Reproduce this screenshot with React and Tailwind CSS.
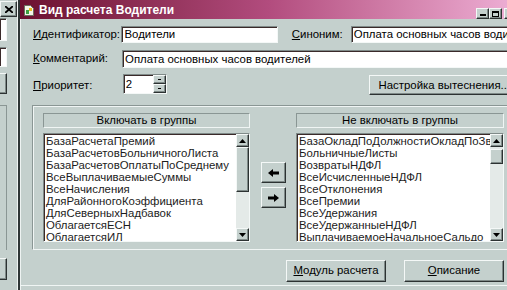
import React from 'react'

const LEFT = [
  'БазаРасчетаПремий',
  'БазаРасчетовБольничногоЛиста',
  'БазаРасчетовОплатыПоСреднему',
  'ВсеВыплачиваемыеСуммы',
  'ВсеНачисления',
  'ДляРайонногоКоэффициента',
  'ДляСеверныхНадбавок',
  'ОблагаетсяЕСН',
  'ОблагаетсяИЛ',
]

const RIGHT = [
  'БазаОкладПоДолжностиОкладПоЗвании',
  'БольничныеЛисты',
  'ВозвратыНДФЛ',
  'ВсеИсчисленныеНДФЛ',
  'ВсеОтклонения',
  'ВсеПремии',
  'ВсеУдержания',
  'ВсеУдержанныеНДФЛ',
  'ВыплачиваемоеНачальноеСальдо',
]

const raised =
  'border border-t-[#f4f8f7] border-l-[#f4f8f7] border-b-[#2c3232] border-r-[#2c3232] shadow-[inset_-1px_-1px_#7f8a88]'
const sunken =
  'border border-t-[#7f8a88] border-l-[#7f8a88] border-b-[#f4f8f7] border-r-[#f4f8f7] shadow-[inset_1px_1px_#3a2a2a]'

function Tri({ down }) {
  return (
    <svg width="7" height="4" viewBox="0 0 7 4">
      <path d={down ? 'M0 0h7L3.5 4z' : 'M3.5 0 7 4H0z'} fill="#000" />
    </svg>
  )
}

function Arrow({ right }) {
  return (
    <svg width="11" height="8" viewBox="0 0 11 8" className={right ? '' : 'rotate-180'}>
      <path d="M0 2.5h6V0l5 4-5 4V5.5H0z" fill="#000" />
    </svg>
  )
}

function ScrollBar({ thumb }) {
  return (
    <div className="w-[13px] flex flex-col">
      <div className={`h-[13px] flex items-center justify-center bg-[#c4d0cd] ${raised}`}>
        <Tri />
      </div>
      <div className="flex-1 flex flex-col bg-[#e4eae8]">
        {thumb}
      </div>
      <div className={`h-[13px] flex items-center justify-center bg-[#c4d0cd] ${raised}`}>
        <Tri down />
      </div>
    </div>
  )
}

function ListBox({ items, thumb }) {
  return (
    <div className={`h-[109px] flex bg-white ${sunken}`}>
      <div className="flex-1 min-w-0 overflow-hidden pt-[1px] pl-[2px]">
        {items.map((t) => (
          <div key={t} className="h-[12px] leading-[12px] whitespace-nowrap text-[#1c1c1c]">
            {t}
          </div>
        ))}
      </div>
      <ScrollBar thumb={thumb} />
    </div>
  )
}

function U({ children }) {
  return <span className="underline underline-offset-1">{children}</span>
}

export default function App() {
  return (
    <div className="w-[507px] h-[290px] overflow-hidden flex bg-[#c4d0cd] text-[11.4px] text-black font-['Liberation_Sans',Arial,sans-serif]">
      {/* окно позади */}
      <div className="w-[18px] shrink-0 flex flex-col border-r border-[#eef3f2]">
        <div className={`w-[17px] h-[16px] mt-px flex items-center justify-center ${raised}`}>
          <svg width="8" height="7" viewBox="0 0 8 7">
            <path d="M0 0l8 7M8 0 0 7" stroke="#000" strokeWidth="1.8" />
          </svg>
        </div>
        <div className={`w-[7px] h-[23px] mt-[1px] bg-white ${sunken} border-l-0`} />
        <div className={`w-[7px] h-[20px] mt-[6px] bg-white ${sunken} border-l-0`} />
        <div className={`w-[7px] h-[21px] mt-[6px] ${raised} border-l-0`} />
        <div className="w-[7px] h-[145px] mt-[11px] border-t border-r border-[#8a9694]" />
        <div className={`w-[7px] h-[22px] mt-[8px] ${raised} border-l-0`} />
      </div>

      {/* диалог */}
      <div className="w-[500px] shrink-0 flex flex-col overflow-hidden border-l-2 border-[#2e3636] shadow-[inset_1px_0_#eef3f2]">
        <div className="h-[19px] shrink-0 flex items-start bg-gradient-to-r from-[#6c1030] via-[#b24c7e] to-[#eeb0d6]">
          <div className="ml-[4px] mt-[5px] w-[10px] h-[11px]">
            <svg width="10" height="11" viewBox="0 0 10 11">
              <path d="M0.5 0.5h6l3 3v7h-9z" fill="#f4f4e8" stroke="#6a7060" />
              <rect x="2" y="5" width="3" height="4" fill="#3ca040" />
              <rect x="5" y="3" width="3" height="3" fill="#e8c020" />
            </svg>
          </div>
          <div className="ml-[5px] mt-[3px] text-white font-bold text-[12px] leading-[14px] whitespace-nowrap">
            Вид расчета Водители
          </div>
          <div className="ml-auto mt-[8px] flex">
            <div className={`w-[13px] h-[11px] bg-[#c4d0cd] flex items-end justify-center pb-[2px] ${raised}`}>
              <div className="w-[6px] h-[2px] bg-black" />
            </div>
            <div className={`w-[13px] h-[11px] bg-[#c4d0cd] flex items-center justify-center ${raised}`}>
              <div className="w-[7px] h-[6px] border border-t-2 border-black" />
            </div>
            <div className={`w-[14px] h-[11px] ml-[2px] bg-[#c4d0cd] ${raised}`} />
          </div>
        </div>

        <div className="flex items-center mt-[7px] h-[17px]">
          <div className="ml-[13px] w-[90px] whitespace-nowrap"><U>И</U>дентификатор:</div>
          <div className={`w-[159px] h-[17px] bg-white px-[2px] leading-[15px] ${sunken}`}>Водители</div>
          <div className="ml-[14px] w-[60px]"><U>С</U>иноним:</div>
          <div className={`w-[170px] h-[17px] bg-white px-[2px] leading-[15px] whitespace-nowrap overflow-hidden ${sunken}`}>
            Оплата основных часов водителей
          </div>
        </div>

        <div className="flex items-center mt-[7px] h-[18px]">
          <div className="ml-[13px] w-[90px]"><U>К</U>омментарий:</div>
          <div className={`w-[400px] h-[18px] bg-white px-[2px] leading-[16px] whitespace-nowrap ${sunken}`}>
            Оплата основных часов водителей
          </div>
        </div>

        <div className="flex items-start mt-[6px] h-[21px]">
          <div className="ml-[13px] w-[90px] mt-[3px]"><U>П</U>риоритет:</div>
          <div className={`w-[44px] h-[20px] flex bg-white ${sunken}`}>
            <div className="flex-1 pl-[2px] leading-[18px]">2</div>
            <div className="w-[13px] flex flex-col">
              <div className={`h-[9px] bg-[#c4d0cd] flex items-center justify-center ${raised}`}>
                <div className="w-[3px] h-[1px] bg-black" />
              </div>
              <div className={`h-[9px] bg-[#c4d0cd] flex items-center justify-center ${raised}`}>
                <div className="w-[3px] h-[1px] bg-black" />
              </div>
            </div>
          </div>
          <div className={`ml-[202px] mt-px w-[150px] h-[20px] pl-[9px] leading-[18px] whitespace-nowrap ${raised}`}>
            Настройка вытеснения...
          </div>
        </div>

        <div className="ml-[12px] mt-[10px] w-[484px] h-[145px] border border-t-[#8a9694] border-l-[#8a9694] border-b-[#f0f5f4] border-r-[#f0f5f4] shadow-[inset_1px_1px_#f0f5f4] pt-[7px] pl-[10px] flex">
          <div className="w-[207px] flex flex-col">
            <div className="h-[15px] flex items-center justify-center border border-t-[#8a9694] border-l-[#8a9694] border-b-[#f0f5f4] border-r-[#f0f5f4]">
              Включать в группы
            </div>
            <div className="mt-[5px]">
              <ListBox
                items={LEFT}
                thumb={<div className={`h-[45px] bg-[#c4d0cd] ${raised}`} />}
              />
            </div>
          </div>
          <div className="w-[46px] pl-[11px] pt-[49px] flex flex-col gap-[4px]">
            <div className={`w-[25px] h-[21px] flex items-center justify-center ${raised}`}>
              <Arrow />
            </div>
            <div className={`w-[25px] h-[21px] flex items-center justify-center ${raised}`}>
              <Arrow right />
            </div>
          </div>
          <div className="w-[208px] flex flex-col">
            <div className="h-[15px] flex items-center justify-center border border-t-[#8a9694] border-l-[#8a9694] border-b-[#f0f5f4] border-r-[#f0f5f4]">
              Не включать в группы
            </div>
            <div className="mt-[5px]">
              <ListBox
                items={RIGHT}
                thumb={<div className={`mt-[2px] h-[15px] bg-[#c4d0cd] ${raised}`} />}
              />
            </div>
          </div>
        </div>

        <div className="flex mt-[10px] ml-[266px] gap-[18px]">
          <div className={`w-[100px] h-[22px] flex items-center justify-center ${raised}`}>
            <span><U>М</U>одуль расчета</span>
          </div>
          <div className={`w-[100px] h-[22px] flex items-center justify-center ${raised}`}>
            <span><U>О</U>писание</span>
          </div>
        </div>

        <div className="mt-[3px] flex-1 border-t border-[#f0f5f4]" />
      </div>
    </div>
  )
}
